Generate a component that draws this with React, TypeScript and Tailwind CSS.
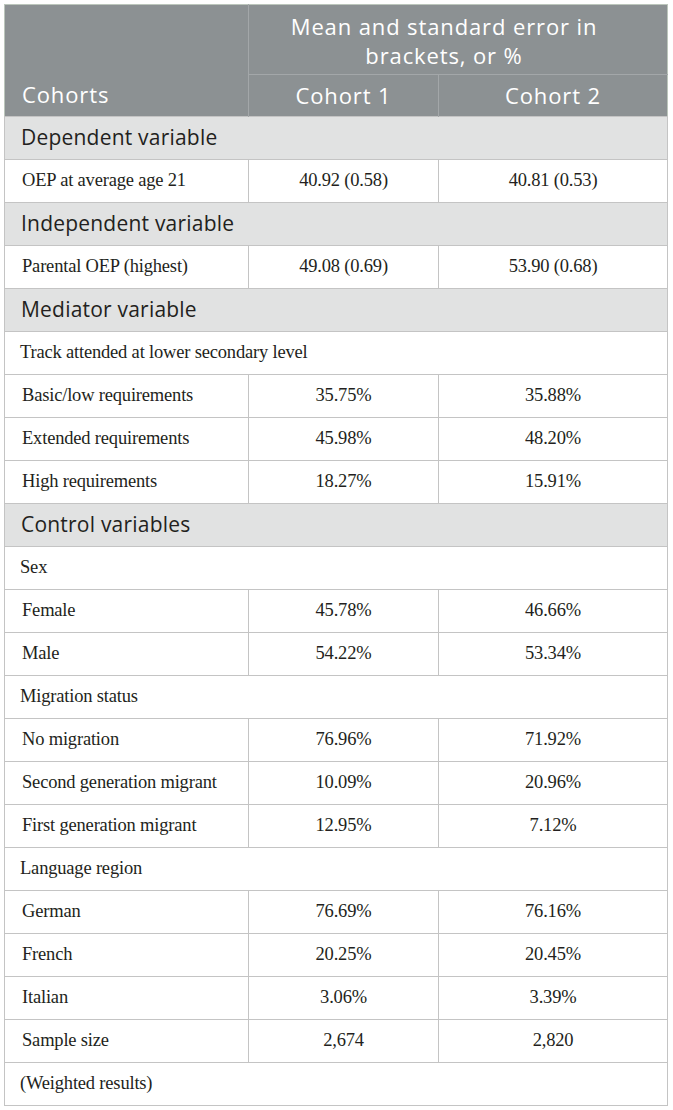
import React from "react";

type Row =
  | { kind: "section"; label: string }
  | { kind: "sub"; label: string }
  | { kind: "data"; label: string; c1: string; c2: string };

const rows: Row[] = [
  { kind: "section", label: "Dependent variable" },
  { kind: "data", label: "OEP at average age 21", c1: "40.92 (0.58)", c2: "40.81 (0.53)" },
  { kind: "section", label: "Independent variable" },
  { kind: "data", label: "Parental OEP (highest)", c1: "49.08 (0.69)", c2: "53.90 (0.68)" },
  { kind: "section", label: "Mediator variable" },
  { kind: "sub", label: "Track attended at lower secondary level" },
  { kind: "data", label: "Basic/low requirements", c1: "35.75%", c2: "35.88%" },
  { kind: "data", label: "Extended requirements", c1: "45.98%", c2: "48.20%" },
  { kind: "data", label: "High requirements", c1: "18.27%", c2: "15.91%" },
  { kind: "section", label: "Control variables" },
  { kind: "sub", label: "Sex" },
  { kind: "data", label: "Female", c1: "45.78%", c2: "46.66%" },
  { kind: "data", label: "Male", c1: "54.22%", c2: "53.34%" },
  { kind: "sub", label: "Migration status" },
  { kind: "data", label: "No migration", c1: "76.96%", c2: "71.92%" },
  { kind: "data", label: "Second generation migrant", c1: "10.09%", c2: "20.96%" },
  { kind: "data", label: "First generation migrant", c1: "12.95%", c2: "7.12%" },
  { kind: "sub", label: "Language region" },
  { kind: "data", label: "German", c1: "76.69%", c2: "76.16%" },
  { kind: "data", label: "French", c1: "20.25%", c2: "20.45%" },
  { kind: "data", label: "Italian", c1: "3.06%", c2: "3.39%" },
  { kind: "data", label: "Sample size", c1: "2,674", c2: "2,820" },
  { kind: "sub", label: "(Weighted results)" },
];

const sans = "font-['Open_Sans',sans-serif]";
const serif = "font-['Liberation_Serif',serif] text-[18.5px] tracking-[-0.01em]";

export default function App() {
  return (
    <div className="bg-white w-[673px] h-[1110px] pt-[4px] pl-[4px]">
      <table className="table-fixed border-collapse w-[663px] border border-[#bcc6bc] text-[#231f20]">
        <colgroup>
          <col className="w-[244px]" />
          <col className="w-[190px]" />
          <col className="w-[229px]" />
        </colgroup>
        <thead className={`${sans} bg-[#8c9193] text-white text-[22px] tracking-[0.04em]`}>
          <tr className="h-[70px]">
            <th rowSpan={2} className="border-r border-[#a3a7a9] align-bottom text-left font-normal pl-[17px] pb-[5px]">
              Cohorts
            </th>
            <th colSpan={2} className="border-b border-[#a3a7a9] font-normal leading-[29px] pl-[20px] pr-[48px] pt-[2px]">
              Mean and standard error in brackets, or %
            </th>
          </tr>
          <tr className="h-[42px]">
            <th className="border-r border-[#a3a7a9] font-normal">Cohort 1</th>
            <th className="font-normal">Cohort 2</th>
          </tr>
        </thead>
        <tbody>
          {rows.map((r, i) => {
            if (r.kind === "section") {
              return (
                <tr key={i} className="h-[43px] bg-[#e1e2e2]">
                  <td colSpan={3} className={`${sans} border border-[#c4c4c4] text-[21px] tracking-[0.01em] pl-[16px]`}>
                    {r.label}
                  </td>
                </tr>
              );
            }
            if (r.kind === "sub") {
              return (
                <tr key={i} className="h-[43px]">
                  <td colSpan={3} className={`${serif} border border-[#c4c4c4] pl-[15px]`}>
                    {r.label}
                  </td>
                </tr>
              );
            }
            return (
              <tr key={i} className="h-[43px]">
                <td className={`${serif} border border-[#c4c4c4] pl-[17px]`}>{r.label}</td>
                <td className={`${serif} border border-[#c4c4c4] text-center`}>{r.c1}</td>
                <td className={`${serif} border border-[#c4c4c4] text-center`}>{r.c2}</td>
              </tr>
            );
          })}
        </tbody>
      </table>
    </div>
  );
}
